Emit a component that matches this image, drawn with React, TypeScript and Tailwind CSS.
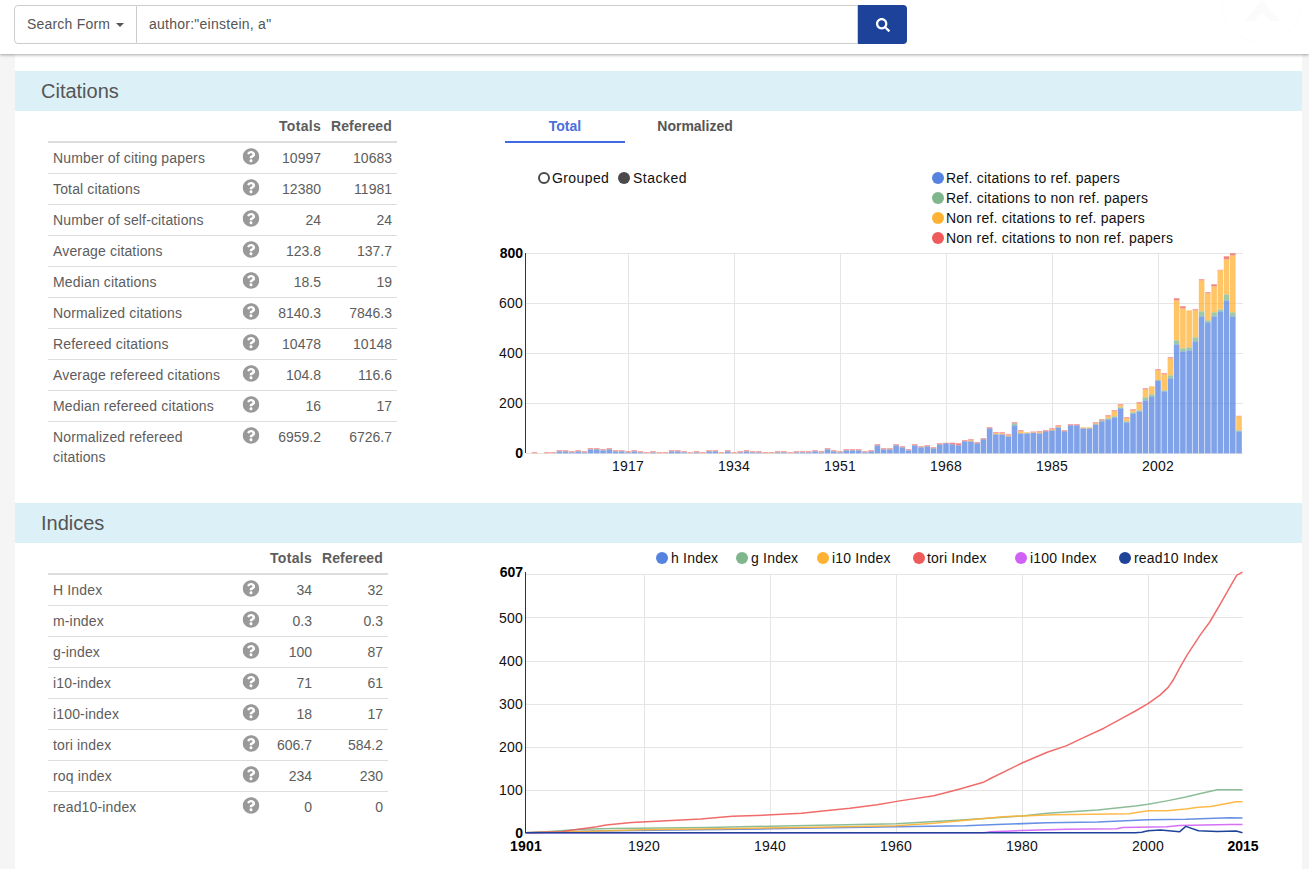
import { FaQuestionCircle, FaSearch } from 'react-icons/fa';

type StatRow = { label: string; total: string; refereed: string };

const citationRows: StatRow[] = [
  { label: 'Number of citing papers', total: '10997', refereed: '10683' },
  { label: 'Total citations', total: '12380', refereed: '11981' },
  { label: 'Number of self-citations', total: '24', refereed: '24' },
  { label: 'Average citations', total: '123.8', refereed: '137.7' },
  { label: 'Median citations', total: '18.5', refereed: '19' },
  { label: 'Normalized citations', total: '8140.3', refereed: '7846.3' },
  { label: 'Refereed citations', total: '10478', refereed: '10148' },
  { label: 'Average refereed citations', total: '104.8', refereed: '116.6' },
  { label: 'Median refereed citations', total: '16', refereed: '17' },
  { label: 'Normalized refereed citations', total: '6959.2', refereed: '6726.7' },
];

const indexRows: StatRow[] = [
  { label: 'H Index', total: '34', refereed: '32' },
  { label: 'm-index', total: '0.3', refereed: '0.3' },
  { label: 'g-index', total: '100', refereed: '87' },
  { label: 'i10-index', total: '71', refereed: '61' },
  { label: 'i100-index', total: '18', refereed: '17' },
  { label: 'tori index', total: '606.7', refereed: '584.2' },
  { label: 'roq index', total: '234', refereed: '230' },
  { label: 'read10-index', total: '0', refereed: '0' },
];

const BLUE = '#5683e0';
const GREEN = '#7fb68c';
const ORANGE = '#ffb133';
const RED = '#ef5b5b';
const PURPLE = '#cf62f5';
const NAVY = '#1f4399';

// bar tops in pixels above the baseline, 1901-1967
const earlyBars = [
  0, 1, 0, 1, 1, 3, 3, 2, 3, 2, 5, 5, 4, 5, 3, 3, 2, 3, 2, 1, 2, 1, 1, 3, 3, 2, 1, 2, 1, 3, 3, 1, 3, 1, 2, 3, 2, 2, 1,
  1, 2, 2, 1, 2, 2, 2, 3, 2, 5, 3, 2, 4, 4, 4, 2, 3, 9, 5, 5, 9, 7, 4, 9, 7, 8, 6, 10,
];

// 1968-2015, cumulative tops: blue, green, orange, red
const lateBars = [
  [10, 10, 10, 10.5], [9, 9, 9, 10.5], [8, 8, 8, 10], [12, 12, 12, 13], [12, 12, 13, 14], [10, 10, 10, 11],
  [14, 14, 14, 15], [25, 25, 25, 26], [19, 19, 20, 21], [19, 19, 20, 21], [17, 17, 18, 19], [28, 30, 30, 31],
  [20, 20, 22, 23], [20, 20, 21, 21], [20.5, 20.5, 21, 21.7], [20, 20, 21, 22], [22, 22, 22, 23], [23, 23, 24, 25],
  [26, 26, 27, 28], [22, 22, 22, 23], [28, 28, 28, 29], [28, 28, 28, 29], [25, 25, 26, 26], [25, 25, 26, 26],
  [29, 29, 30, 31], [32, 33, 33, 34], [34, 35, 37, 38], [36, 37, 42, 43], [45, 46, 48, 49], [31, 32, 35, 36],
  [40, 41, 43, 44], [42, 43, 50, 51], [53, 56, 64, 65], [57, 59, 67, 67], [73, 73, 83, 84], [62, 63, 79, 80],
  [75, 78, 95, 96], [109, 113, 153, 155], [102, 105, 145, 147], [103, 106, 143, 143], [112, 116, 143, 144],
  [137, 142, 173, 174], [131, 133, 160, 161], [137, 141, 167, 169], [142, 144, 183, 183.5], [153, 159, 194, 197],
  [137, 141, 198, 200], [22, 23, 37, 37.5],
];

const bars = [...earlyBars.map((t) => [Math.max(t - 1, 0), Math.max(t - 1, 0), Math.max(t - 0.8, 0), t]), ...lateBars];

const lineSeries: { color: string; points: number[][] }[] = [
  {
    color: BLUE,
    points: [[1901, 0], [1912, 4], [1925, 6], [1940, 9], [1960, 14], [1971, 16], [1976, 19], [1984, 23], [1992, 25], [2000, 30], [2006, 31], [2013, 35], [2015, 34]],
  },
  {
    color: GREEN,
    points: [[1901, 0], [1905, 3], [1910, 8], [1915, 10], [1930, 12], [1940, 15], [1960, 21], [1971, 30], [1980, 39], [1984, 45], [1992, 53], [1998, 62], [2000, 66], [2003, 74], [2006, 83], [2008, 90], [2011, 100], [2015, 100]],
  },
  {
    color: ORANGE,
    points: [[1901, 0], [1910, 3], [1920, 7], [1925, 8], [1935, 10], [1945, 12], [1960, 16], [1966, 22], [1972, 30], [1977, 37], [1980, 39], [1985, 42], [1997, 44], [2000, 51], [2003, 51], [2006, 55], [2008, 59], [2010, 61], [2014, 72], [2015, 72]],
  },
  {
    color: RED,
    points: [[1901, 0], [1907, 2], [1908.5, 6], [1910.5, 10], [1912.5, 14], [1914, 18], [1918, 23.5], [1923.6, 28], [1929, 32], [1934, 38], [1939.5, 41], [1945, 45], [1948, 50], [1952.7, 57], [1957, 65], [1960.6, 74], [1966, 86], [1970, 101], [1974, 118], [1975, 126], [1980, 162], [1984, 187], [1987, 202], [1989, 216], [1993, 243], [1996, 267], [1998, 283], [2000, 300], [2001.9, 320], [2003.2, 338], [2004, 355], [2005.1, 385], [2006.2, 413], [2008.3, 460], [2009.8, 490], [2011.4, 530], [2013, 571], [2014.1, 599], [2015, 606]],
  },
  {
    color: PURPLE,
    points: [[1901, 0], [1974, 0], [1975, 2], [1980, 5], [1987, 8], [1995, 9], [1996, 12], [2003, 14], [2005, 17], [2013, 19], [2015, 19]],
  },
  {
    color: NAVY,
    points: [[1901, 0], [1998, 0], [1999, 1], [2000, 4.6], [2002, 6], [2005, 2], [2006, 14.7], [2008, 4.6], [2011, 3], [2014, 4], [2015, 0]],
  },
];

const barX = (i: number) => 628 + (i - 16) * 6.235 - 2.8;
const lineX = (year: number) => Math.max(644 + (year - 1920) * 6.3, 525.7);
const lineY = (value: number) => 832.7 - value * 0.43;

const StatsTable = ({ rows, tableWidth, totalsWidth }: { rows: StatRow[]; tableWidth: string; totalsWidth: string }) => (
  <table className={`${tableWidth} table-fixed border-separate border-spacing-0 text-[14px] leading-5 text-[#5d5d5d]`}>
    <colgroup>
      <col className="w-[188px]" />
      <col className="w-[30px]" />
      <col className={totalsWidth} />
      <col className="w-[71px]" />
    </colgroup>
    <thead>
      <tr>
        <th className="border-b-2 border-[#ddd] p-[5px]" />
        <th className="border-b-2 border-[#ddd] p-[5px]" />
        <th className="border-b-2 border-[#ddd] py-[5px] pr-[5px] pl-0 text-right font-bold tracking-[0.3px]">{'Totals'}</th>
        <th className="border-b-2 border-[#ddd] py-[5px] pr-[5px] pl-0 text-right font-bold tracking-[0.15px]">{'Refereed'}</th>
      </tr>
    </thead>
    <tbody>
      {rows.map((row, rowIndex) => (
        <tr key={`row-${row.label}`}>
          <td className={`p-[5px] align-top tracking-[0.15px] ${rowIndex > 0 ? 'border-t border-[#ddd]' : ''}`}>{row.label}</td>
          <td className={`p-0 align-top ${rowIndex > 0 ? 'border-t border-[#ddd]' : ''}`}>
            <FaQuestionCircle className="mx-auto mt-[5px] -translate-x-[0.5px] text-[#999]" size={17} />
          </td>
          <td className={`py-[5px] pr-[5px] pl-0 text-right align-top ${rowIndex > 0 ? 'border-t border-[#ddd]' : ''}`}>{row.total}</td>
          <td className={`py-[5px] pr-[5px] pl-0 text-right align-top ${rowIndex > 0 ? 'border-t border-[#ddd]' : ''}`}>{row.refereed}</td>
        </tr>
      ))}
    </tbody>
  </table>
);

const SectionTitle = ({ title }: { title: string }) => (
  <h2 className="flex h-10 items-center bg-[#dcf0f7] pl-[26px] text-[20px] text-[#555]">{title}</h2>
);

const CitationsChart = () => (
  <svg viewBox="490 143 790 340" className="h-[340px] w-[790px]" fontSize="14" fill="#111">
    <circle cx="544" cy="178" r="5" fill="none" stroke="#4a4a4a" strokeWidth="2" />
    <text x="552" y="183" className="tracking-[0.4px]">{'Grouped'}</text>
    <circle cx="624" cy="178" r="6" fill="#4a4a4a" />
    <text x="633" y="183" className="tracking-[0.5px]">{'Stacked'}</text>
    {[
      { color: BLUE, label: 'Ref. citations to ref. papers' },
      { color: GREEN, label: 'Ref. citations to non ref. papers' },
      { color: ORANGE, label: 'Non ref. citations to ref. papers' },
      { color: RED, label: 'Non ref. citations to non ref. papers' },
    ].map((item, i) => (
      <g key={item.label}>
        <circle cx="938" cy={178 + i * 20} r="6" fill={item.color} />
        <text x="946" y={183 + i * 20} className="tracking-[0.23px]">{item.label}</text>
      </g>
    ))}
    {[253.5, 303.5, 353.5, 403.5].map((y) => (
      <line key={y} x1="526" x2="1243" y1={y} y2={y} stroke="#e5e5e5" />
    ))}
    {[628.5, 734.5, 840.5, 946.5, 1052.5, 1158.5].map((x) => (
      <line key={x} x1={x} x2={x} y1="253" y2="453" stroke="#e5e5e5" />
    ))}
    <line x1="526" x2="1243" y1="453.5" y2="453.5" stroke="#e5e5e5" />
    {bars.map((bar, i) => {
      const [b, g, o, r] = bar;
      const x = barX(i);
      return (
        <g key={`bar-${i}`} fillOpacity="0.75">
          <rect x={x} width="5.6" y={453.3 - b} height={b} fill={BLUE} />
          <rect x={x} width="5.6" y={453.3 - g} height={g - b} fill={GREEN} />
          <rect x={x} width="5.6" y={453.3 - o} height={o - g} fill={ORANGE} />
          <rect x={x} width="5.6" y={453.3 - r} height={r - o} fill={RED} />
        </g>
      );
    })}
    <line x1="525.5" x2="525.5" y1="253" y2="453" stroke="#333" />
    <text x="523" y="258" textAnchor="end" fontWeight="bold" fill="#000">{'800'}</text>
    {[
      { y: 308, label: '600' },
      { y: 358, label: '400' },
      { y: 408, label: '200' },
    ].map((tick) => (
      <text key={tick.label} x="523" y={tick.y} textAnchor="end" className="tracking-[0.2px]">{tick.label}</text>
    ))}
    <text x="523" y="458" textAnchor="end" fontWeight="bold" fill="#000">{'0'}</text>
    {[
      { x: 628, label: '1917' },
      { x: 734, label: '1934' },
      { x: 840, label: '1951' },
      { x: 946, label: '1968' },
      { x: 1052, label: '1985' },
      { x: 1158, label: '2002' },
    ].map((tick) => (
      <text key={tick.label} x={tick.x} y="471" textAnchor="middle" className="tracking-[0.2px]">{tick.label}</text>
    ))}
  </svg>
);

const IndicesChart = () => (
  <svg viewBox="490 543 790 326" className="h-[326px] w-[790px]" fontSize="14" fill="#111">
    {[
      { cx: 662, tx: 671, color: BLUE, label: 'h Index' },
      { cx: 742, tx: 751, color: GREEN, label: 'g Index' },
      { cx: 823, tx: 832, color: ORANGE, label: 'i10 Index' },
      { cx: 919, tx: 927, color: RED, label: 'tori Index' },
      { cx: 1021, tx: 1030, color: PURPLE, label: 'i100 Index' },
      { cx: 1125, tx: 1134, color: NAVY, label: 'read10 Index' },
    ].map((item) => (
      <g key={item.label}>
        <circle cx={item.cx} cy="558" r="6" fill={item.color} />
        <text x={item.tx} y="563" className="tracking-[0.2px]">{item.label}</text>
      </g>
    ))}
    {[574.5, 617.5, 661.5, 704.5, 747.5, 790.5].map((y) => (
      <line key={y} x1="526" x2="1243" y1={y} y2={y} stroke="#e5e5e5" />
    ))}
    {[644.5, 770.5, 896.5, 1022.5, 1148.5].map((x) => (
      <line key={x} x1={x} x2={x} y1="574" y2="833" stroke="#e5e5e5" />
    ))}
    {lineSeries.map((series) => (
      <polyline
        key={series.color}
        points={series.points.map(([year, value]) => `${lineX(year)},${lineY(value)}`).join(' ')}
        fill="none"
        stroke={series.color}
        strokeOpacity={series.color === NAVY ? 1 : 0.9}
        strokeWidth="1.5"
        strokeLinejoin="round"
      />
    ))}
    <line x1="525.5" x2="525.5" y1="572" y2="833" stroke="#333" />
    <text x="523" y="577" textAnchor="end" fontWeight="bold" fill="#000">{'607'}</text>
    {[
      { y: 623, label: '500' },
      { y: 666, label: '400' },
      { y: 709, label: '300' },
      { y: 752, label: '200' },
      { y: 795, label: '100' },
    ].map((tick) => (
      <text key={tick.label} x="523" y={tick.y} textAnchor="end" className="tracking-[0.2px]">{tick.label}</text>
    ))}
    <text x="523" y="838" textAnchor="end" fontWeight="bold" fill="#000">{'0'}</text>
    <text x="526" y="851" textAnchor="middle" fontWeight="bold" fill="#000" className="tracking-[0.2px]">{'1901'}</text>
    {[
      { x: 644, label: '1920' },
      { x: 770, label: '1940' },
      { x: 896, label: '1960' },
      { x: 1022, label: '1980' },
      { x: 1148, label: '2000' },
    ].map((tick) => (
      <text key={tick.label} x={tick.x} y="851" textAnchor="middle" className="tracking-[0.2px]">{tick.label}</text>
    ))}
    <text x="1243" y="851" textAnchor="middle" fontWeight="bold" fill="#000">{'2015'}</text>
  </svg>
);

const App = () => {
  return (
    <div className="relative flex h-[869px] flex-col overflow-hidden bg-white font-['Liberation_Sans',Arial,sans-serif]">
      <header className="relative z-10 flex h-[54px] shrink-0 items-start bg-white pt-[5px] pl-[14px] shadow-[0_1px_3px_rgba(0,0,0,0.35)]">
        <button className="flex h-[39px] w-[123px] items-center rounded-l border border-[#ccc] bg-white pl-[12px] text-[14px] tracking-[0.2px] text-[#555]">
          {'Search Form'}
          <span className="mt-[1px] ml-[6px] border-x-[4px] border-t-[4px] border-x-transparent border-t-[#555]" />
        </button>
        <div className="flex h-[39px] w-[721px] items-center border-y border-r border-[#ccc] pl-[12px] text-[14px] tracking-[0.25px] text-[#555]">
          {'author:"einstein, a"'}
        </div>
        <button className="flex h-[39px] w-[49px] items-center justify-center rounded-r bg-[#1c4399] text-white">
          <FaSearch size={14} />
        </button>
        <svg className="absolute top-[-37px] right-[7px] h-[80px] w-[80px]" viewBox="0 0 80 80">
          <circle cx="40" cy="40" r="39.5" fill="none" stroke="#fdfdfd" />
          <path d="M22 58 L40 37 L58 58 L48 58 L40 49 L32 58 Z" fill="#fbfbfb" />
        </svg>
      </header>
      <div className="flex flex-1 bg-[#f5f5f5] pr-[7px] pl-[15px]">
        <main className="flex-1 bg-white pt-[17px]">
          <section>
            <SectionTitle title="Citations" />
            <div className="flex h-[392px]">
              <div className="w-[475px] shrink-0 pl-[33px]">
                <StatsTable rows={citationRows} tableWidth="w-[349px]" totalsWidth="w-[60px]" />
              </div>
              <div>
                <div className="ml-[15px] flex h-[32px] text-[14px] leading-[30px] font-bold">
                  <div className="w-[120px] border-b-2 border-[#4169e1] text-center text-[#4a6fdc]">{'Total'}</div>
                  <div className="w-[140px] text-center text-[#555]">{'Normalized'}</div>
                </div>
                <CitationsChart />
              </div>
            </div>
          </section>
          <section>
            <SectionTitle title="Indices" />
            <div className="flex">
              <div className="w-[475px] shrink-0 pl-[33px]">
                <StatsTable rows={indexRows} tableWidth="w-[340px]" totalsWidth="w-[51px]" />
              </div>
              <IndicesChart />
            </div>
          </section>
        </main>
      </div>
    </div>
  );
};

export default App;
